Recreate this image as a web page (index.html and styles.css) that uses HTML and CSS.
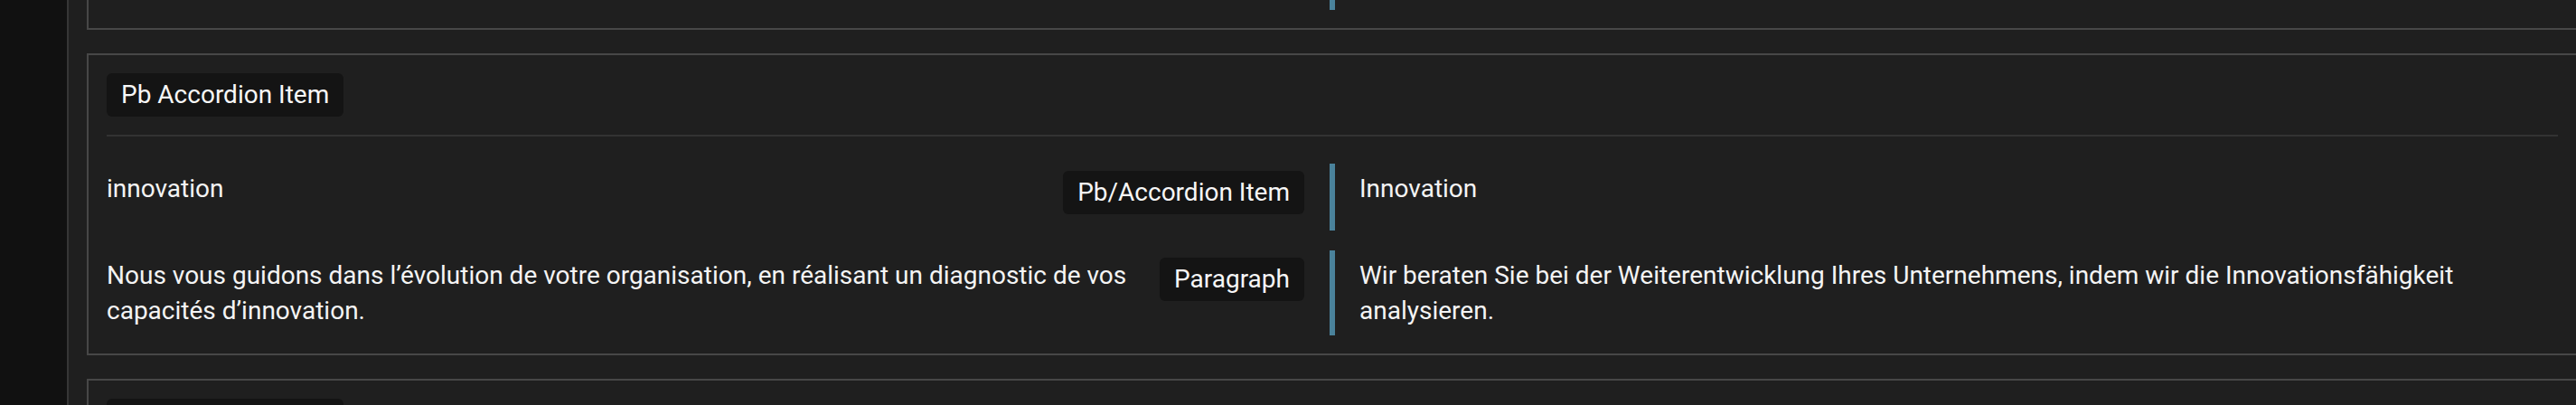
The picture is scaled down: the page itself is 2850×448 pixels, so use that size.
FILE: index.html
```html
<!DOCTYPE html>
<html>
<head>
	<title>translations</title>

	<link rel="stylesheet" href="styles.css">

</head>
<body>

	<div class="sidebar"></div>

	<div class="main">

		<div class="card cut">
			<div class="rows">
				<div class="row">
					<div class="cell source"></div>
					<div class="cell target stub"></div>
				</div>
			</div>
		</div>

		<div class="card">
			<div class="card-head">
				<span class="tag">Pb Accordion Item</span>
			</div>
			<div class="rows">
				<div class="row">
					<div class="cell source">
						<p class="text">innovation</p>
						<span class="tag tall">Pb/Accordion Item</span>
					</div>
					<div class="cell target">
						<p class="text">Innovation</p>
					</div>
				</div>
				<div class="row">
					<div class="cell source">
						<p class="text">Nous vous guidons dans l’évolution de votre organisation, en réalisant un diagnostic de vos capacités d’innovation.</p>
						<span class="tag">Paragraph</span>
					</div>
					<div class="cell target">
						<p class="text">Wir beraten Sie bei der Weiterentwicklung Ihres Unternehmens, indem wir die Innovationsfähigkeit analysieren.</p>
					</div>
				</div>
			</div>
		</div>

		<div class="card">
			<div class="card-head">
				<span class="tag">Pb Accordion Item</span>
			</div>
		</div>

	</div>

</body>
</html>
```

FILE: styles.css
```css
html, body {
	margin: 0;
	height: 448px;
	overflow: hidden;
}

body {
	display: flex;
	background: #1f1f1f;
	color: #f4f4f4;
	font-family: Roboto, "Noto Sans", sans-serif;
	font-size: 28px;
}

.sidebar {
	width: 74px;
	flex-shrink: 0;
	background: #111111;
	border-right: 2px solid #363636;
}

.main {
	flex: 1;
	padding-left: 20px;
}

.card {
	margin-right: -2px;
	margin-bottom: 26px;
	padding: 20px 20px 20px 20px;
	border: 2px solid #474747;
}

.card.cut {
	border-top: none;
	padding-top: 0;
}

.card-head {
	padding-bottom: 20px;
	border-bottom: 2px solid #333333;
}

.tag {
	display: inline-block;
	flex-shrink: 0;
	height: 48px;
	padding: 0 16px;
	line-height: 48px;
	background: #141414;
	border-radius: 6px;
	color: #f7f7f7;
	white-space: nowrap;
}

.tag.tall {
	margin-bottom: 10px;
}

.rows {
	display: flex;
	flex-direction: column;
	gap: 22px;
	padding-top: 30px;
}

.cut .rows {
	padding-top: 0;
}

.row {
	display: grid;
	grid-template-columns: 1fr 1fr;
}

.cell {
	padding: 8px 0;
}

.cut .cell {
	padding-top: 0;
	padding-bottom: 0;
}

.source {
	display: flex;
	justify-content: space-between;
	align-items: flex-start;
	gap: 22px;
	padding-right: 31px;
}

.target {
	margin-left: -3px;
	padding-left: 27px;
	border-left: 6px solid #4a829b;
}

.target.stub {
	height: 11px;
}

.text {
	margin: 0;
	line-height: 1.4;
}
```
